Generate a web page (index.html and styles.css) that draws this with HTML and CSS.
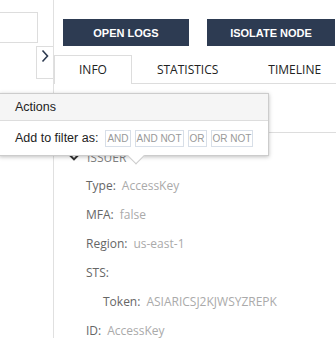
FILE: index.html
```html
<html>
<head>
<meta charset="UTF-8">
<link rel="stylesheet" href="styles.css">
<title>Node details</title>
</head>
<body>
<div class="layout">
    <!-- left sidebar -->
    <aside class="side">
        <div class="search"></div>
        <button class="collapse">
            <svg width="8" height="14" viewBox="0 0 8 14"><path d="M1.5 1.5 L6.5 7 L1.5 12.5" fill="none" stroke="#2d3a50" stroke-width="1.6"/></svg>
        </button>
    </aside>

    <main class="main">
        <div class="actions">
            <button class="action open">OPEN LOGS</button>
            <button class="action isolate">ISOLATE NODE</button>
        </div>

        <div class="tabs">
            <div class="tab active">INFO</div>
            <div class="tab">STATISTICS</div>
            <div class="tab">TIMELINE</div>
        </div>

        <div class="section-head"></div>

        <!-- issuer details -->
        <div class="tree">
            <div class="node">
                <svg width="10" height="7" viewBox="0 0 10 7"><path d="M1 1.2 L5 5.4 L9 1.2" fill="none" stroke="#333" stroke-width="2"/></svg>
                <span>ISSUER</span>
            </div>
            <div class="row"><span class="key">Type:</span><span class="val">AccessKey</span></div>
            <div class="row"><span class="key">MFA:</span><span class="val">false</span></div>
            <div class="row"><span class="key">Region:</span><span class="val">us-east-1</span></div>
            <div class="row"><span class="key">STS:</span></div>
            <div class="row sub"><span class="key">Token:</span><span class="val">ASIARICSJ2KJWSYZREPK</span></div>
            <div class="row"><span class="key">ID:</span><span class="val">AccessKey</span></div>
        </div>
    </main>
</div>

<!-- actions popup -->
<div class="popup">
    <div class="popup-head">Actions</div>
    <div class="popup-body">
        <span>Add to filter as:</span>
        <div class="filters">
            <button class="filter">AND</button>
            <button class="filter">AND NOT</button>
            <button class="filter">OR</button>
            <button class="filter">OR NOT</button>
        </div>
    </div>
    <div class="caret"></div>
</div>
</body>
</html>
```

FILE: styles.css
```css
*{
    box-sizing: border-box;
}
body{
    margin: 0;
    background: #fff;
    font-family: "Open Sans", "Liberation Sans", sans-serif;
    overflow: hidden;
}
.layout{
    display: flex;
    height: 338px;
}
.side{
    flex-shrink: 0;
    width: 54px;
    border-right: 1px solid #e0e0e0;
    display: flex;
    flex-direction: column;
    align-items: flex-end;
    padding-top: 12px;
}
.search{
    align-self: flex-start;
    margin-left: -2px;
    width: 40px;
    height: 31px;
    border: 1px solid #dddddd;
}
.collapse{
    margin-top: 3px;
    width: 17px;
    height: 33px;
    padding: 2px 0 0 0;
    border: 1px solid #dddddd;
    border-right: none;
    background: #fff;
    display: flex;
    justify-content: center;
    align-items: flex-start;
}
.main{
    flex: 1;
    min-width: 0;
    overflow: hidden;
}
.actions{
    display: flex;
    gap: 18px;
    padding: 19px 0 0 9px;
}
.action{
    flex-shrink: 0;
    height: 27px;
    border: none;
    background: #2d3b52;
    color: #fff;
    font-family: "Liberation Sans", Arial, sans-serif;
    font-weight: bold;
    font-size: 11px;
    padding: 0;
}
.open{
    width: 126px;
}
.isolate{
    width: 128px;
}
.tabs{
    display: flex;
    margin-top: 9px;
    border-bottom: 1px solid #dddddd;
    height: 29px;
}
.tab{
    flex-shrink: 0;
    height: 29px;
    padding: 0 24px;
    border: 1px solid transparent;
    border-bottom: none;
    font-size: 12px;
    color: #222;
    line-height: 27px;
    white-space: nowrap;
}
.tab.active{
    border-color: #dddddd;
    background: #fff;
    height: 29px;
    margin-bottom: -1px;
}
.section-head{
    height: 49px;
    border-bottom: 1px solid #dddddd;
}
.tree{
    padding-top: 10px;
}
.node{
    display: flex;
    align-items: center;
    height: 28px;
    padding-left: 15px;
    gap: 8px;
    font-size: 12px;
    color: #808080;
}
.row{
    height: 29px;
    line-height: 29px;
    padding-left: 32px;
    font-size: 12px;
    white-space: nowrap;
}
.row.sub{
    padding-left: 49px;
}
.key{
    color: #666;
}
.val{
    color: #aaa;
    margin-left: 6px;
}
.popup{
    position: absolute;
    left: -1px;
    top: 93px;
    width: 270px;
    background: #fff;
    border: 1px solid #cccccc;
    box-shadow: 0 1px 4px rgba(0, 0, 0, 0.25);
    font-family: "Liberation Sans", Arial, sans-serif;
    font-size: 12.5px;
    color: #222;
}
.popup-head{
    height: 27px;
    line-height: 26px;
    padding-left: 15px;
    background: #f5f5f5;
    border-bottom: 1px solid #dddddd;
}
.popup-body{
    display: flex;
    align-items: center;
    height: 34px;
    padding-left: 15px;
    gap: 7px;
    position: relative;
    z-index: 2;
    background: #fff;
}
.filters{
    display: flex;
    gap: 4px;
}
.filter{
    height: 17px;
    padding: 0 1px;
    border: 1px solid #d8dfe8;
    background: #fff;
    color: #999;
    font-family: "Liberation Sans", Arial, sans-serif;
    font-size: 10px;
    line-height: 15px;
}
.caret{
    position: absolute;
    left: 130px;
    bottom: -7px;
    width: 12px;
    height: 12px;
    background: #fff;
    border-right: 1px solid #cccccc;
    border-bottom: 1px solid #cccccc;
    transform: rotate(45deg);
    z-index: 3;
}
```
